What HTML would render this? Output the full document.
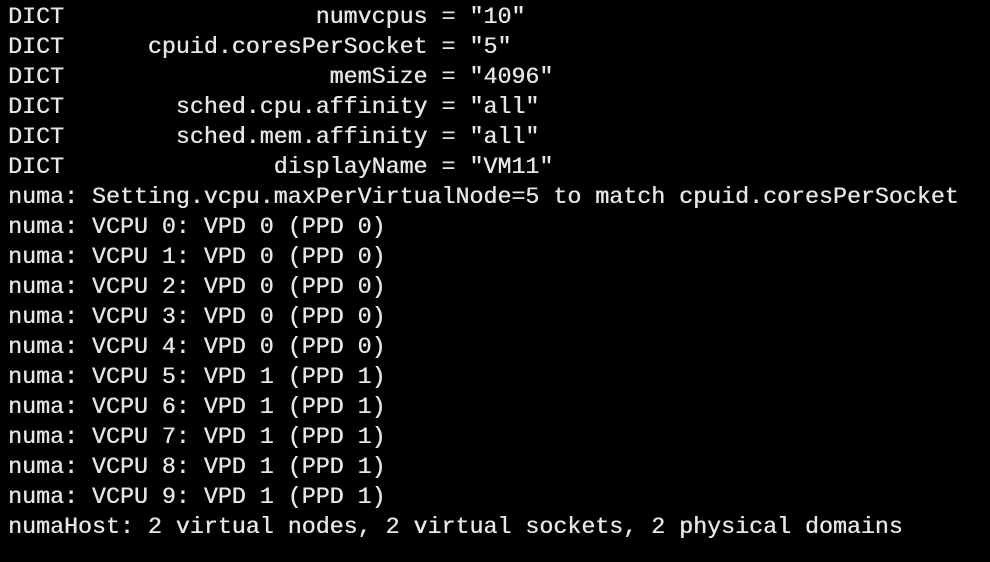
<!DOCTYPE html>
<html><head><meta charset="utf-8"><style>
html,body{margin:0;background:#000;width:990px;height:562px;overflow:hidden}
pre{margin:0;padding:2px 0 0 8px;font-family:"Liberation Mono",monospace;font-size:23.3px;line-height:30px;color:#e6e6e6;letter-spacing:0;text-shadow:0.4px 0 0 #e6e6e6}
</style></head><body><pre>DICT                  numvcpus = "10"
DICT      cpuid.coresPerSocket = "5"
DICT                   memSize = "4096"
DICT        sched.cpu.affinity = "all"
DICT        sched.mem.affinity = "all"
DICT               displayName = "VM11"
numa: Setting.vcpu.maxPerVirtualNode=5 to match cpuid.coresPerSocket
numa: VCPU 0: VPD 0 (PPD 0)
numa: VCPU 1: VPD 0 (PPD 0)
numa: VCPU 2: VPD 0 (PPD 0)
numa: VCPU 3: VPD 0 (PPD 0)
numa: VCPU 4: VPD 0 (PPD 0)
numa: VCPU 5: VPD 1 (PPD 1)
numa: VCPU 6: VPD 1 (PPD 1)
numa: VCPU 7: VPD 1 (PPD 1)
numa: VCPU 8: VPD 1 (PPD 1)
numa: VCPU 9: VPD 1 (PPD 1)
numaHost: 2 virtual nodes, 2 virtual sockets, 2 physical domains</pre></body></html>
